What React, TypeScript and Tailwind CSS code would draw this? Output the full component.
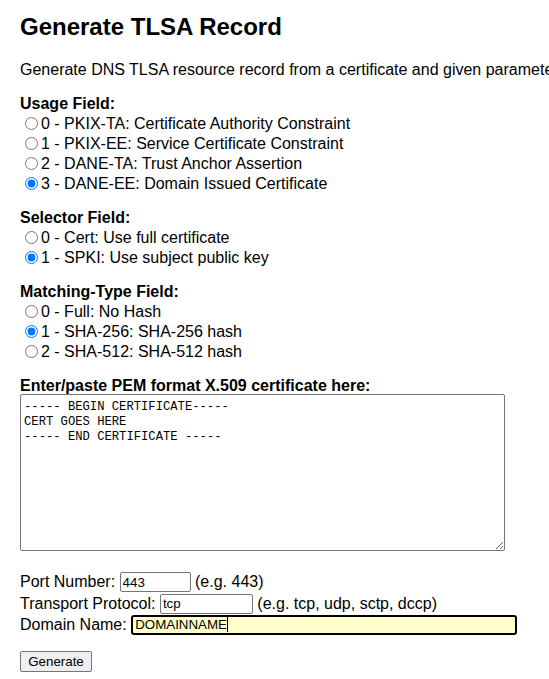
import React from "react";

type Option = { value: string; label: string };

const usage: Option[] = [
  { value: "0", label: "0 - PKIX-TA: Certificate Authority Constraint" },
  { value: "1", label: "1 - PKIX-EE: Service Certificate Constraint" },
  { value: "2", label: "2 - DANE-TA: Trust Anchor Assertion" },
  { value: "3", label: "3 - DANE-EE: Domain Issued Certificate" },
];

const selector: Option[] = [
  { value: "0", label: "0 - Cert: Use full certificate" },
  { value: "1", label: "1 - SPKI: Use subject public key" },
];

const matching: Option[] = [
  { value: "0", label: "0 - Full: No Hash" },
  { value: "1", label: "1 - SHA-256: SHA-256 hash" },
  { value: "2", label: "2 - SHA-512: SHA-512 hash" },
];

function RadioGroup({ title, name, options, checked }: { title: string; name: string; options: Option[]; checked: string }) {
  return (
    <div className="mb-[16px]">
      <div className="font-bold h-[18px] leading-[18px]">{title}</div>
      {options.map((o) => (
        <label key={o.value} className="flex items-center h-[20px] pt-[1px]">
          <input
            type="radio"
            name={name}
            value={o.value}
            defaultChecked={o.value === checked}
            className="w-[13px] h-[13px] ml-[5px] mr-[3px] accent-[#0075ff]"
          />
          <span>{o.label}</span>
        </label>
      ))}
    </div>
  );
}

const pem = "----- BEGIN CERTIFICATE-----\nCERT GOES HERE\n----- END CERTIFICATE -----";

export default function App() {
  return (
    <div
      className="min-h-[679px] bg-white text-black px-[20px] pt-[13px] text-[16px] overflow-hidden"
      style={{ fontFamily: '"Liberation Sans", Arial, sans-serif' }}
    >
      <h2 className="text-[24px] font-bold leading-[28px] mb-[20px]">Generate TLSA Record</h2>
      <p className="leading-[18px] mb-[16px] whitespace-nowrap">
        Generate DNS TLSA resource record from a certificate and given parameters.
      </p>

      <RadioGroup title="Usage Field:" name="usage" options={usage} checked="3" />
      <RadioGroup title="Selector Field:" name="selector" options={selector} checked="1" />
      <RadioGroup title="Matching-Type Field:" name="matching" options={matching} checked="1" />

      <div className="mb-[16px]">
        <div className="font-bold h-[18px] leading-[18px]">Enter/paste PEM format X.509 certificate here:</div>
        <textarea
          defaultValue={pem}
          className="block mt-[-1px] w-[485px] h-[157px] border border-[#767676] rounded-[2px] px-[3px] py-[5px] text-[12.2px] leading-[15px] text-black"
          style={{ fontFamily: '"Liberation Mono", "DejaVu Sans Mono", monospace' }}
        />
        <div className="h-[4px]" />
      </div>

      <div className="flex flex-col">
        <div className="flex items-center h-[22px]">
          <span>Port Number:&nbsp;</span>
          <input
            defaultValue="443"
            className="w-[71px] h-[20px] border border-[#767676] rounded-[2px] px-[2px] text-[13.33px] outline-none"
          />
          <span>&nbsp;(e.g. 443)</span>
        </div>
        <div className="flex items-center h-[21px]">
          <span>Transport Protocol:&nbsp;</span>
          <input
            defaultValue="tcp"
            className="w-[93px] h-[20px] border border-[#767676] rounded-[2px] px-[2px] text-[13.33px] outline-none"
          />
          <span>&nbsp;(e.g. tcp, udp, sctp, dccp)</span>
        </div>
        <div className="flex items-center h-[21px]">
          <span>Domain Name:&nbsp;</span>
          <div className="w-[386px] h-[20px] border-2 border-black rounded-[3px] bg-[#ffffcc] flex items-center px-[2px] text-[13.33px]">
            <span>DOMAINNAME</span>
            <span className="w-[1px] h-[15px] bg-black" />
          </div>
        </div>
      </div>

      <button className="mt-[16px] w-[72px] h-[21px] border border-[#767676] rounded-[2px] bg-[#efefef] text-[13.33px] flex items-center justify-center">
        Generate
      </button>
    </div>
  );
}
